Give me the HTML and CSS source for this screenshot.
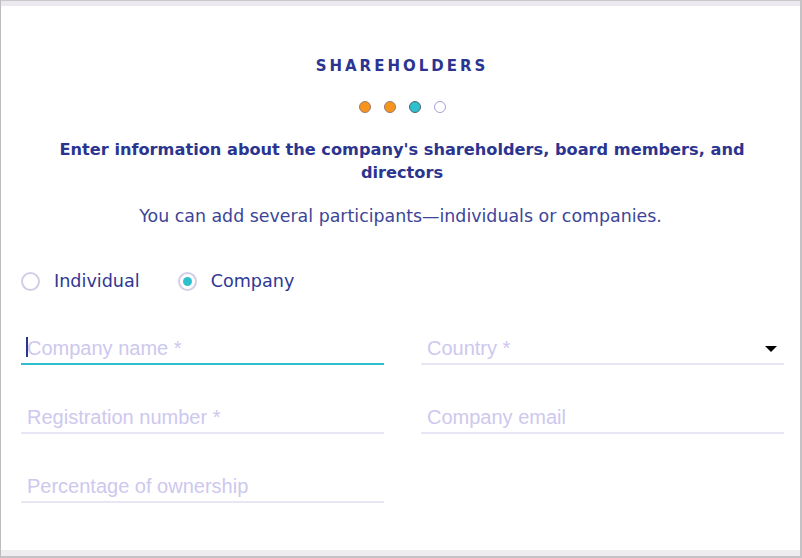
FILE: index.html
```html
<!DOCTYPE html>
<html>
<head>
<meta charset="utf-8">
<link rel="stylesheet" href="styles.css">
</head>
<body>
<div class="frame">
  <div class="topband"></div>
  <main class="content">
    <h1 class="title">SHAREHOLDERS</h1>
    <div class="steps">
      <span class="dot done"></span>
      <span class="dot done"></span>
      <span class="dot current"></span>
      <span class="dot"></span>
    </div>
    <h2 class="lead">Enter information about the company's shareholders, board members, and directors</h2>
    <p class="sub">You can add several participants—individuals or companies.</p>
    <div class="radios">
      <label class="radio"><span class="circle"></span><span class="rlabel">Individual</span></label>
      <label class="radio checked"><span class="circle"></span><span class="rlabel">Company</span></label>
    </div>
    <div class="grid">
      <div class="field focused"><span class="caret"></span><span class="ph">Company name *</span></div>
      <div class="field select"><span class="ph">Country *</span><span class="arrow"></span></div>
      <div class="field"><span class="ph">Registration number *</span></div>
      <div class="field"><span class="ph">Company email</span></div>
      <div class="field"><span class="ph">Percentage of ownership</span></div>
    </div>
  </main>
  <div class="bottomband"></div>
</div>
</body>
</html>
```

FILE: styles.css
```css
* { box-sizing: border-box; }
html, body { margin: 0; padding: 0; background: #fff; }
.frame {
  width: 802px;
  height: 558px;
  border-left: 1px solid #bdbbbe;
  border-right: 2px solid #c4c2c5;
  border-top: 1px solid #c9c7ca;
  border-bottom: 2px solid #c4c2c5;
  display: flex;
  flex-direction: column;
  background: #fff;
  overflow: hidden;
}
.topband { height: 5px; background: #ebe9ed; flex: none; }
.bottomband { height: 6px; background: #efedf0; flex: none; }
.content {
  flex: 1;
  display: flex;
  flex-direction: column;
  align-items: center;
  font-family: "DejaVu Sans", sans-serif;
  color: #2b3590;
}
.title {
  margin: 51px 0 0 0;
  font-size: 15px;
  font-weight: bold;
  letter-spacing: 3px;
  line-height: 18px;
  padding-left: 3px;
}
.steps {
  display: flex;
  gap: 13px;
  margin-top: 26px;
  padding-left: 3px;
}
.dot {
  width: 12px;
  height: 12px;
  border-radius: 50%;
  border: 1.5px solid #a79fda;
  background: #fff;
}
.dot.done { background: #f7941d; border-color: #9c7b6b; }
.dot.current { background: #2ec0cf; border-color: #4f6670; }
.lead {
  margin: 25px 0 0 0;
  width: 720px;
  text-align: center;
  font-size: 16.2px;
  font-weight: bold;
  line-height: 23px;
  padding-left: 3px;
}
.sub {
  margin: 21px 0 0 0;
  font-size: 17.4px;
  line-height: 22px;
  color: #3d4598;
}
.radios {
  align-self: stretch;
  display: flex;
  gap: 38px;
  padding-left: 20px;
  margin-top: 43px;
}
.radio { display: flex; align-items: center; gap: 14px; }
.circle {
  width: 19px;
  height: 19px;
  border-radius: 50%;
  border: 2px solid #d2cee8;
  display: flex;
  align-items: center;
  justify-content: center;
}
.radio.checked .circle::after {
  content: "";
  width: 9px;
  height: 9px;
  border-radius: 50%;
  background: #2ec0cf;
}
.rlabel { font-size: 17.6px; color: #2f3893; line-height: 22px; }
.grid {
  align-self: stretch;
  display: grid;
  grid-template-columns: 363px 363px;
  column-gap: 37px;
  row-gap: 33px;
  padding-left: 20px;
  margin-top: 37px;
}
.field {
  height: 36px;
  border-bottom: 2px solid #e8e5f5;
  display: flex;
  align-items: center;
  padding-left: 6px;
  padding-top: 4px;
  position: relative;
  font-family: "Liberation Sans", Arial, sans-serif;
}
.field.focused { border-bottom-color: #2ebfcc; }
.ph { font-size: 20px; color: #cdc8ee; line-height: 24px; }
.caret {
  position: absolute;
  left: 5px;
  top: 8px;
  width: 2px;
  height: 20px;
  background: #2b3590;
}
.field.select { justify-content: space-between; padding-right: 7px; }
.arrow {
  width: 0;
  height: 0;
  border-left: 6px solid transparent;
  border-right: 6px solid transparent;
  border-top: 6px solid #000;
  margin-top: 2px;
}
```
